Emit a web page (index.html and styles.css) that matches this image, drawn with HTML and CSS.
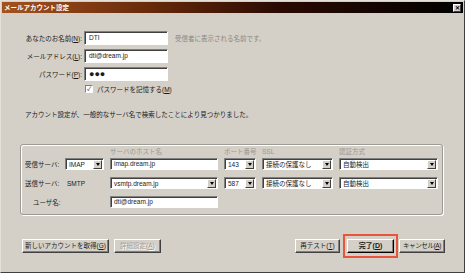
FILE: index.html
```html
<!DOCTYPE html>
<html lang="ja">
<head>
    <meta charset="UTF-8">
    <title>メールアカウント設定</title>
    <link rel="stylesheet" href="styles.css">
</head>
<body>

<div class="window">
    <div class="titlebar">
        <span class="title">メールアカウント設定</span>
        <span class="close">✕</span>
    </div>

    <div class="fields">
        <label>あなたのお名前(<u>N</u>):</label>
        <div class="input">DTI</div>
        <span class="hint">受信者に表示される名前です。</span>

        <label>メールアドレス(<u>L</u>):</label>
        <div class="input">dti@dream.jp</div>
        <span></span>

        <label>パスワード(<u>P</u>):</label>
        <div class="input dots">●●●</div>
        <span></span>
    </div>

    <div class="remember">
        <span class="check">✓</span>
        <span>パスワードを記憶する(<u>M</u>)</span>
    </div>

    <p class="message">アカウント設定が、一般的なサーバ名で検索したことにより見つかりました。</p>

    <div class="group">
        <div class="grid head">
            <span></span>
            <span></span>
            <span>サーバのホスト名</span>
            <span>ポート番号</span>
            <span>SSL</span>
            <span>認証方式</span>
        </div>
        <div class="grid">
            <span class="label">受信サーバ:</span>
            <div class="select"><span>IMAP</span><i class="drop"></i></div>
            <div class="input">imap.dream.jp</div>
            <div class="select"><span>143</span><i class="drop"></i></div>
            <div class="select"><span>接続の保護なし</span><i class="drop"></i></div>
            <div class="select"><span>自動検出</span><i class="drop"></i></div>
        </div>
        <div class="grid">
            <span class="label">送信サーバ:</span>
            <span class="plain">SMTP</span>
            <div class="select"><span>vsmtp.dream.jp</span><i class="drop"></i></div>
            <div class="select"><span>587</span><i class="drop"></i></div>
            <div class="select"><span>接続の保護なし</span><i class="drop"></i></div>
            <div class="select"><span>自動検出</span><i class="drop"></i></div>
        </div>
        <div class="grid">
            <span class="label indent">ユーザ名:</span>
            <span></span>
            <div class="input">dti@dream.jp</div>
        </div>
    </div>

    <div class="buttons">
        <div class="left">
            <button class="btn">新しいアカウントを取得(<u>G</u>)</button>
            <button class="btn disabled">詳細設定(<u>A</u>)</button>
        </div>
        <div class="right">
            <button class="btn retest">再テスト(<u>T</u>)</button>
            <span class="mark"><button class="btn done">完了(<u>D</u>)</button></span>
            <button class="btn cancel">キャンセル(<u>A</u>)</button>
        </div>
    </div>
</div>

</body>
</html>
```

FILE: styles.css
```css
body {
    margin: 0;
    font-family: "Liberation Sans", "Noto Sans CJK JP", sans-serif;
    font-size: 6.5px;
    line-height: 9px;
    color: #1a1a1a;
}
u {
    text-decoration: underline;
}
.window {
    width: 465px;
    height: 273px;
    box-sizing: border-box;
    background: #d4d0c8;
    border: 1px solid;
    border-color: #e4e1da #404040 #404040 #e4e1da;
    padding: 1px;
    display: flex;
    flex-direction: column;
}
.titlebar {
    height: 11px;
    background: linear-gradient(to right, #a4531f 0%, #6b2c0c 30%, #2a0a02 60%, #000 100%);
    display: flex;
    align-items: center;
    justify-content: space-between;
    padding: 0 2px 0 2px;
}
.title {
    color: #fff;
    font-weight: bold;
    font-size: 6.5px;
    font-family: "Noto Sans CJK JP", sans-serif;
}
.close {
    width: 8px;
    height: 8px;
    background: #d4d0c8;
    border: 1px solid;
    border-color: #fff #404040 #404040 #fff;
    box-sizing: border-box;
    font-size: 6px;
    line-height: 6px;
    text-align: center;
    font-weight: bold;
    color: #000;
}

/* top fields */
.fields {
    margin-top: 18px;
    display: grid;
    grid-template-columns: 80px 84px auto;
    column-gap: 2px;
    row-gap: 4px;
    align-items: center;
}
.fields label {
    text-align: right;
    white-space: nowrap;
}
.hint {
    color: #8a8782;
    margin-left: 5px;
}
.input {
    height: 14px;
    box-sizing: border-box;
    background: #fff;
    border: 1px solid;
    border-color: #808080 #fff #fff #808080;
    box-shadow: inset 1px 1px 0 #404040;
    padding: 0 4px;
    line-height: 12px;
    white-space: nowrap;
    overflow: hidden;
}
.dots {
    font-size: 9px;
}
.remember {
    margin: 3px 0 0 83px;
    display: flex;
    align-items: center;
    gap: 4px;
    height: 10px;
}
.check {
    width: 8px;
    height: 8px;
    box-sizing: border-box;
    background: #fff;
    border: 1px solid;
    border-color: #808080 #fff #fff #808080;
    font-size: 6px;
    line-height: 6px;
    text-align: center;
}
.message {
    margin: 16px 0 0 23px;
    height: 10px;
    line-height: 10px;
}

/* server group */
.group {
    margin: 24px 0 0 18px;
    width: 423px;
    height: 71px;
    box-sizing: border-box;
    border: 1px solid #9c9a94;
    border-radius: 3px;
    box-shadow: inset 1px 1px 0 #fff, 1px 1px 0 #fff;
    padding: 2px 0 0 4px;
    display: flex;
    flex-direction: column;
    gap: 7px;
}
.grid {
    display: grid;
    grid-template-columns: 34px 39px 108px 32px 71px 99px;
    grid-template-rows: 12px;
    column-gap: 6px;
    height: 12px;
    align-items: center;
    white-space: nowrap;
}
.grid.head {
    height: 9px;
    grid-template-rows: 9px;
    color: #9a9790;
    margin-bottom: -5px;
}
.grid .input {
    height: 12px;
    line-height: 10px;
    padding: 0 3px;
}
.indent {
    padding-left: 8px;
}
.plain {
    padding-left: 2px;
}
.select {
    height: 12px;
    box-sizing: border-box;
    background: #fff;
    border: 1px solid;
    border-color: #808080 #fff #fff #808080;
    box-shadow: inset 1px 1px 0 #404040;
    display: flex;
    align-items: center;
    justify-content: space-between;
    padding: 1px 1px 0 3px;
}
.drop {
    width: 9px;
    height: 9px;
    box-sizing: border-box;
    background: #d4d0c8;
    border: 1px solid;
    border-color: #fff #404040 #404040 #fff;
    display: flex;
    align-items: center;
    justify-content: center;
}
.drop::after {
    content: "";
    border-top: 3px solid #000;
    border-left: 2.5px solid transparent;
    border-right: 2.5px solid transparent;
}

/* bottom buttons */
.buttons {
    margin: 24px 0 0 20px;
    width: 423px;
    display: flex;
    justify-content: space-between;
    align-items: center;
}
.left, .right {
    display: flex;
    align-items: center;
}
.left {
    gap: 5px;
}
.btn {
    height: 14px;
    box-sizing: border-box;
    background: #d4d0c8;
    border: 1px solid;
    border-color: #fff #404040 #404040 #fff;
    box-shadow: inset -1px -1px 0 #808080;
    font-family: "Liberation Sans", "Noto Sans CJK JP", sans-serif;
    font-size: 6.5px;
    color: #1a1a1a;
    padding: 0 2px;
    margin: 0;
    line-height: 12px;
    white-space: nowrap;
}
.btn.disabled {
    color: #a09d96;
    text-shadow: 1px 1px 0 #fff;
    width: 47px;
}
.retest {
    width: 45px;
    margin-right: 3px;
}
.mark {
    border: 2px solid #e8553a;
    padding: 3px 2px;
    margin: -5px 1px -5px 0;
}
.done {
    width: 47px;
    font-weight: bold;
    font-size: 7px;
    border-color: #fff #000 #000 #fff;
}
.cancel {
    width: 46px;
    letter-spacing: -0.4px;
}
```
